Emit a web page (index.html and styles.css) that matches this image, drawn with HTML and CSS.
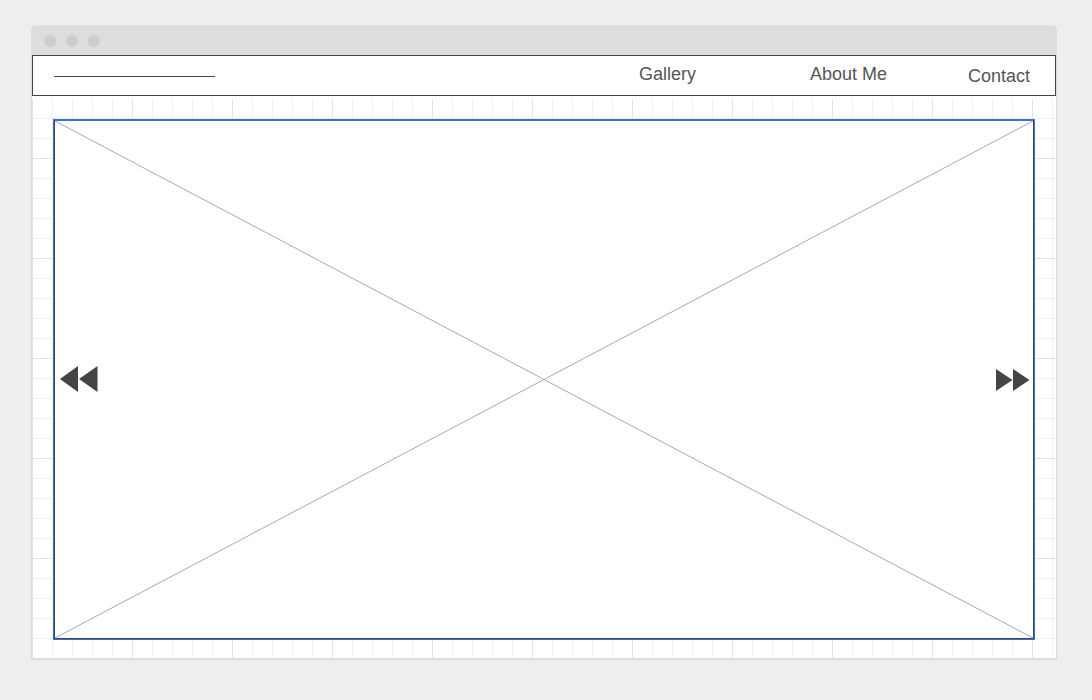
FILE: index.html
```html
<!DOCTYPE html>
<html>
<head>
<meta charset="utf-8">
<link rel="stylesheet" href="styles.css">
</head>
<body>
<div class="window">
  <div class="titlebar">
    <span class="dot"></span><span class="dot"></span><span class="dot"></span>
  </div>
  <div class="page">
    <nav class="nav">
      <span class="logo"></span>
      <a class="link gallery">Gallery</a>
      <a class="link about">About Me</a>
      <a class="link contact">Contact</a>
    </nav>
    <div class="canvas">
      <div class="hero">
        <div class="frame">
          <svg class="cross" viewBox="0 0 100 100" preserveAspectRatio="none">
            <line x1="0" y1="0" x2="100" y2="100"/>
            <line x1="100" y1="0" x2="0" y2="100"/>
          </svg>
          <svg class="arrow prev" width="40" height="26" viewBox="0 0 40 26">
            <polygon points="1,13 19,0 19,26"/>
            <polygon points="20,13 38.5,0 38.5,26"/>
          </svg>
          <svg class="arrow next" width="34" height="22" viewBox="0 0 34 22">
            <polygon points="0,0 16.5,11 0,22"/>
            <polygon points="17,0 33.5,11 17,22"/>
          </svg>
        </div>
      </div>
    </div>
  </div>
</div>
</body>
</html>
```

FILE: styles.css
```css
html, body {
  margin: 0;
  padding: 0;
  background: #eeeeee;
  font-family: "Liberation Sans", Arial, sans-serif;
}

.window {
  width: 1026px;
  margin: 25px 0 0 31px;
}

.titlebar {
  box-sizing: border-box;
  height: 30px;
  padding: 2px 0 0 13px;
  background: #dddddd;
  border-radius: 5px 5px 0 0;
  display: flex;
  align-items: center;
  gap: 10px;
}

.dot {
  width: 12px;
  height: 12px;
  border-radius: 50%;
  background: #cdcdcd;
}

.page {
  border: 1px solid #dadada;
  border-top: 0;
  background: #ffffff;
}

.nav {
  box-sizing: border-box;
  height: 41px;
  border: 1px solid #444444;
  background: #ffffff;
  display: flex;
  align-items: flex-start;
  padding: 0 25px 0 21px;
}

.logo {
  width: 161px;
  height: 1px;
  margin-top: 20px;
  background: #444444;
}

.link {
  font-size: 18px;
  line-height: 20px;
  color: #555555;
  margin-top: 8px;
  white-space: nowrap;
}

.gallery { margin-left: auto; }
.about { margin-left: 114px; }
.contact { margin-left: 81px; margin-top: 10px; }

.canvas {
  box-sizing: border-box;
  height: 563px;
  padding-top: 3px;
  background-color: #ffffff;
  background-image:
    linear-gradient(to right, #e3e3e3 1px, transparent 1px),
    linear-gradient(to bottom, #e3e3e3 1px, transparent 1px),
    linear-gradient(to right, #efefef 1px, transparent 1px),
    linear-gradient(to bottom, #efefef 1px, transparent 1px);
  background-size: 100px 100px, 100px 100px, 20px 20px, 20px 20px;
  background-position: 0 -38px;
  background-origin: padding-box;
  background-clip: content-box;
  display: flex;
  flex-direction: column;
}

.hero {
  box-sizing: border-box;
  width: 982px;
  height: 521px;
  margin: 20px 0 0 21px;
  border: 1px solid #3570d8;
}

.frame {
  box-sizing: border-box;
  height: 100%;
  border: 1px solid #444444;
  border-top-color: #3a72d6;
  background: #ffffff;
  position: relative;
  display: flex;
  align-items: center;
  justify-content: space-between;
  padding: 0 3px 0 4px;
}

.cross {
  position: absolute;
  left: 0;
  top: 0;
  width: 100%;
  height: 100%;
}

.cross line {
  stroke: #a8a8a8;
  stroke-width: 1;
  vector-effect: non-scaling-stroke;
}

.arrow {
  position: relative;
  display: block;
  fill: #444444;
}

.prev {
  margin-top: -2px;
}
```
